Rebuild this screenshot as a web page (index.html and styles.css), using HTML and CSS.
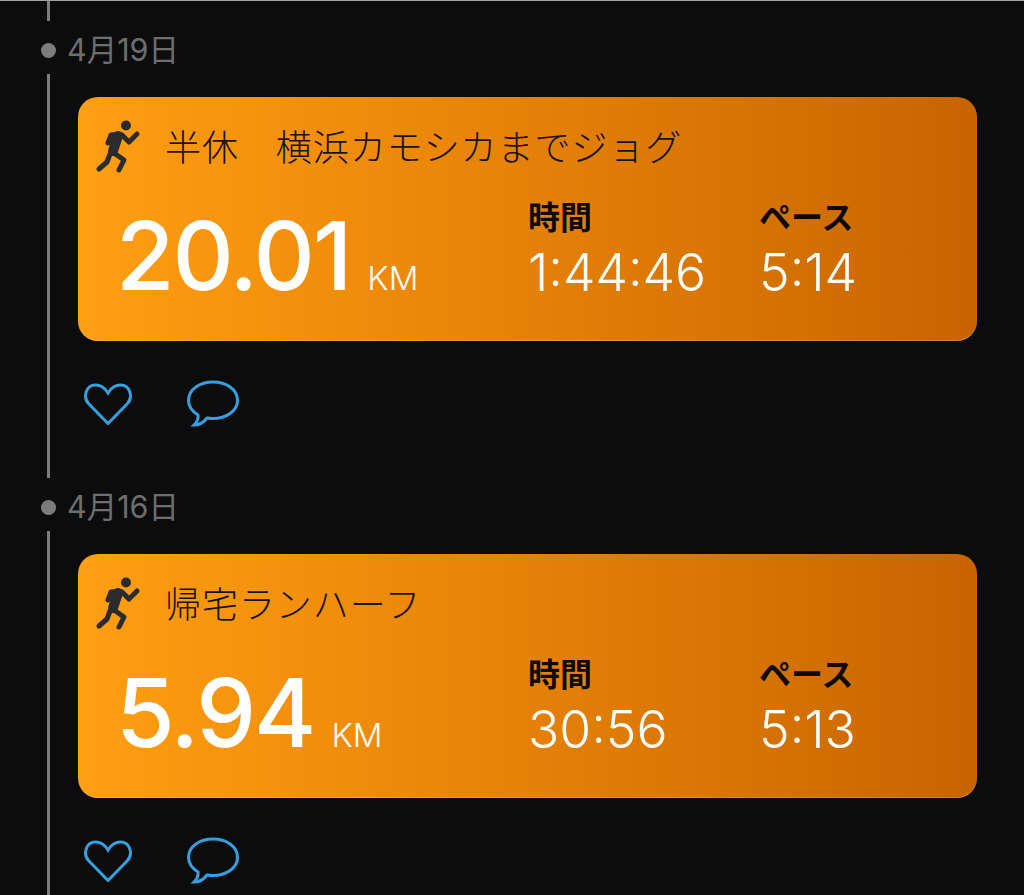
FILE: index.html
```html
<!DOCTYPE html>
<html>

<head>
  <title>Run log</title>
  <meta name="viewport" content="width=device-width, initial-scale=1.0">
  <link rel="stylesheet" href="styles.css">
</head>

<body>
  <svg class="sprites" width="0" height="0">
    <symbol id="runner" viewBox="10 9 50 58">
      <circle cx="41" cy="15.5" r="5" fill="#2b2b2b" stroke="none" />
      <path class="limb" d="M37 25 L44 32 L52 24" />
      <path class="limb" d="M34 24 L26 25 L23 33" />
      <path class="body" d="M33 26 L28 41" />
      <path class="limb" d="M29 43 L39 50 L34 60" />
      <path class="limb" d="M25 44 L22 52 L14 59" />
    </symbol>
    <symbol id="heart" viewBox="0 0 48 42">
      <path d="M24 40.5 L4.5 20.5 C-1 14.5 1.5 2 11.5 2 C17 2 21 5 24 10 C27 5 31 2 36.5 2 C46.5 2 49 14.5 43.5 20.5 Z" />
    </symbol>
    <symbol id="bubble" viewBox="0 0 52 47">
      <path d="M26 2 C39 2 50.5 9 50.5 20.5 C50.5 31 39 38.5 26 38.5 C24 38.5 22 38.3 20 38 C17 42 12 45 7 45 C10 42 11.5 38 11 35 C5.5 31.5 1.5 26.5 1.5 20.5 C1.5 9 13 2 26 2 Z" />
    </symbol>
  </svg>

  <div class="timeline">
    <div class="line-start"></div>

    <div class="entry">
      <div class="date"><span class="dot"></span><span class="date-text">4月19日</span></div>
      <div class="entry-body">
        <div class="card">
          <div class="card-title">
            <svg class="runner"><use href="#runner" /></svg>
            <span class="title-text">半休　横浜カモシカまでジョグ</span>
          </div>
          <div class="stats">
            <div class="distance"><span class="km-value">20.01</span><span class="km-unit">KM</span></div>
            <div class="stat stat-time">
              <div class="stat-label">時間</div>
              <div class="stat-value">1:44:46</div>
            </div>
            <div class="stat">
              <div class="stat-label">ペース</div>
              <div class="stat-value">5:14</div>
            </div>
          </div>
        </div>
        <div class="actions">
          <svg class="heart"><use href="#heart" /></svg>
          <svg class="bubble"><use href="#bubble" /></svg>
        </div>
      </div>
    </div>

    <div class="entry">
      <div class="date"><span class="dot"></span><span class="date-text">4月16日</span></div>
      <div class="entry-body">
        <div class="card">
          <div class="card-title">
            <svg class="runner"><use href="#runner" /></svg>
            <span class="title-text">帰宅ランハーフ</span>
          </div>
          <div class="stats">
            <div class="distance"><span class="km-value">5.94</span><span class="km-unit">KM</span></div>
            <div class="stat stat-time">
              <div class="stat-label">時間</div>
              <div class="stat-value">30:56</div>
            </div>
            <div class="stat">
              <div class="stat-label">ペース</div>
              <div class="stat-value">5:13</div>
            </div>
          </div>
        </div>
        <div class="actions">
          <svg class="heart"><use href="#heart" /></svg>
          <svg class="bubble"><use href="#bubble" /></svg>
        </div>
      </div>
    </div>
  </div>
</body>
</html>
```

FILE: styles.css
```css
/* variables */
:root {
  --bg-color: #0c0c0d;
  --line-color: #7c7c7c;
  --date-color: #6e6e6e;
  --link-color: #35a0e0;
  --ink-color: #2b2b2b;
}

/* global */
* {
  box-sizing: border-box;
}

body,
html {
  margin: 0;
  padding: 0;
  overflow: hidden;
  height: 895px;
  background: var(--bg-color);
  font-family: Inter, "Noto Sans CJK JP", sans-serif;
}

.sprites {
  display: block;
  height: 0;
}

/* timeline */
.timeline {
  border-top: 1px solid #a0a0a0;
  padding-left: 47px;
}

.line-start {
  width: 3px;
  height: 20px;
  background: var(--line-color);
}

.date {
  display: flex;
  align-items: center;
  height: 53px;
  padding-top: 6px;
  margin-left: -6px;
  color: var(--date-color);
  font-size: 30.5px;
}

.date-text {
  margin-bottom: 5px;
}

.dot {
  width: 15px;
  height: 15px;
  margin-right: 11px;
  border-radius: 50%;
  background: var(--line-color);
}

.entry-body {
  border-left: 3px solid var(--line-color);
  padding: 23px 47px 0 28px;
  height: 404px;
}

/* card */
.card {
  width: 899px;
  height: 244px;
  padding: 22px 0 0 17px;
  border-radius: 20px;
  background: linear-gradient(90deg, #ff9f12 0%, #e88408 45%, #c66500 100%);
  box-shadow: inset 0 -1px 0 rgba(255, 210, 150, 0.25);
}

.card-title {
  display: flex;
  align-items: center;
  gap: 20px;
  color: #1a1208;
  font-family: "Noto Sans CJK JP", sans-serif;
  font-size: 36px;
  font-weight: 300;
  letter-spacing: 0.95px;
}

.title-text {
  margin-bottom: 6px;
}

.runner {
  width: 50px;
  height: 58px;
}

.limb,
.body {
  fill: none;
  stroke: var(--ink-color);
  stroke-linecap: round;
  stroke-linejoin: round;
}

.limb {
  stroke-width: 5;
}

.body {
  stroke-width: 10;
}

.stats {
  display: flex;
  align-items: flex-start;
  margin-top: 16px;
  padding-left: 21px;
}

.distance {
  width: 412px;
  margin-top: 5px;
  color: #fff;
}

.km-value {
  font-size: 95px;
  font-weight: 500;
  letter-spacing: -2px;
}

.km-unit {
  margin-left: 17px;
  font-size: 33px;
  font-weight: 300;
}

.stat {
  color: #fff;
}

.stat-time {
  width: 231px;
}

.stat-label {
  margin-bottom: 5px;
  color: #0d0a05;
  font-family: "Noto Sans CJK JP", sans-serif;
  font-size: 32px;
  font-weight: 700;
  line-height: 44px;
}

.stat-value {
  font-size: 51.7px;
  font-weight: 350;
  line-height: 60px;
}

/* actions */
.actions {
  display: flex;
  align-items: center;
  gap: 55px;
  padding: 39px 0 0 6px;
}

.heart,
.bubble {
  fill: none;
  stroke: var(--link-color);
  stroke-width: 3;
}

.heart {
  width: 48px;
  height: 42px;
}

.bubble {
  width: 52px;
  height: 47px;
}
```
